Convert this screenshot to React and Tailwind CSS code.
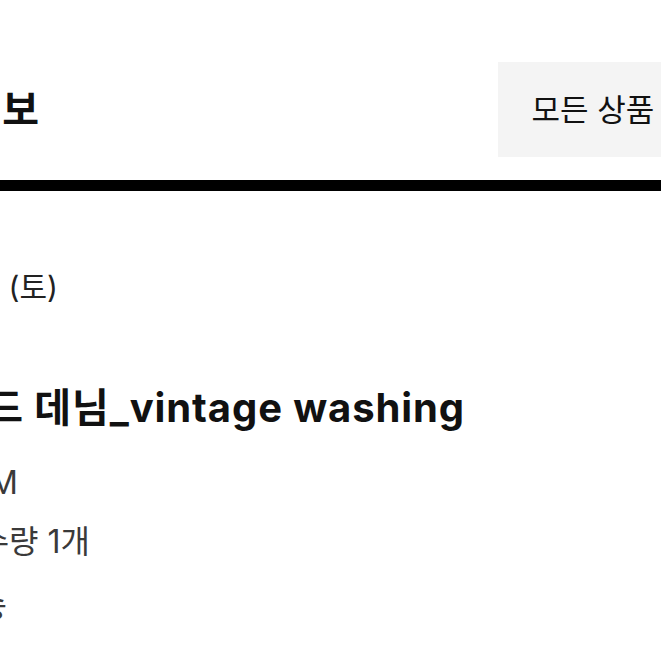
import React from "react";

function ClipLine({ right, className, children }) {
  return (
    <div className="flex justify-end whitespace-nowrap" style={{ width: right }}>
      <span className={"shrink-0 " + className}>{children}</span>
    </div>
  );
}

export default function App() {
  return (
    <div className="w-[661px] h-[661px] overflow-hidden bg-white text-black font-[Inter,'Noto_Sans_CJK_KR',sans-serif]">
      <div className="flex items-center pt-[62px]">
        <ClipLine right={39} className="text-[40px] leading-[95px] font-bold text-[#111]">
          주문 정보
        </ClipLine>
        <div className="ml-auto -mr-[27px] w-[190px] h-[95px] shrink-0 bg-[#f4f4f4] flex items-center justify-center text-[31px] leading-[40px] text-[#111]">
          모든 상품
        </div>
      </div>
      <div className="mt-[23px] h-[11px] bg-black" />
      <div className="mt-[76px] h-[40px]">
        <ClipLine right={58} className="text-[30px] leading-[40px] text-[#222]">
          2024년 3월 16일 (토)
        </ClipLine>
      </div>
      <div className="mt-[77px] h-[48px]">
        <ClipLine right={465} className="text-[40px] leading-[48px] font-bold tracking-[0.9px] text-[#111]">
          와이드 데님_vintage washing
        </ClipLine>
      </div>
      <div className="mt-[31px] h-[40px]">
        <ClipLine right={18} className="text-[32px] leading-[40px] text-[#3a3a3a]">
          사이즈 M
        </ClipLine>
      </div>
      <div className="mt-[19px] h-[40px]">
        <ClipLine right={90} className="text-[32px] leading-[40px] text-[#3a3a3a]">
          수량 1개
        </ClipLine>
      </div>
      <div className="mt-[24px] h-[40px]">
        <ClipLine right={7} className="text-[32px] leading-[40px] text-[#3a3a3a]">
          무료배송
        </ClipLine>
      </div>
    </div>
  );
}
